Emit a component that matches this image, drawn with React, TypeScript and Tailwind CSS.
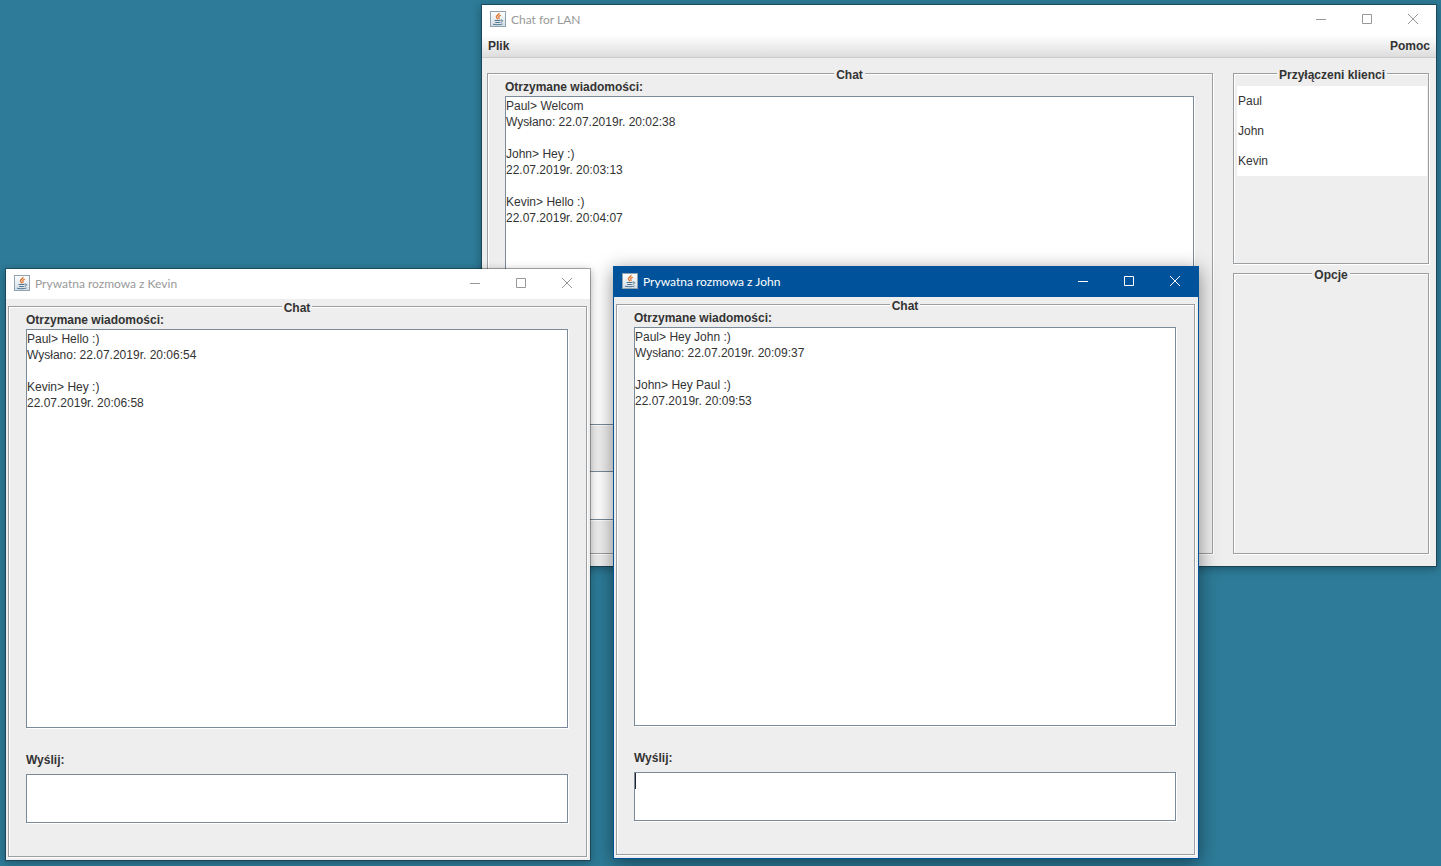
import React, { useId } from "react";

type Message = { author: string; text: string; stamp: string };

function JavaIcon() {
  return (
    <svg width="16" height="16" viewBox="0 0 16 16" fill="none" aria-hidden="true" className="shrink-0">
      <defs>
        <linearGradient id="java-tile" x1="0" y1="0" x2="0" y2="1">
          <stop offset="0" stopColor="#ffffff" />
          <stop offset="1" stopColor="#d3dde5" />
        </linearGradient>
      </defs>
      <rect x="0.5" y="0.5" width="15" height="15" fill="url(#java-tile)" stroke="#8fa3b1" />
      <path d="M9 2c.6 1.800-3.500 2.600-2.500 4.300.5.8 1.300 1.100.8 2" stroke="#e0752c" strokeWidth="1.400" />
      <path d="M10.900 4.300c-1.800.6-2.700 1.300-2 2.200.4.600.2 1.200-.3 1.700" stroke="#e0752c" strokeWidth="1.200" />
      <path d="M4.500 9.500h6M5.200 11.500h4.600M3 13.200c2.200.7 7.300.7 9.500-.2" stroke="#4f7690" />
      <path d="M10.800 9c2.500-.4 2.500 1.600-.2 2.300" stroke="#4f7690" />
    </svg>
  );
}

function WindowButton({ label, path }: { label: string; path: string }) {
  return (
    <button type="button" aria-label={label} className="flex h-full w-[46px] items-center justify-center">
      <svg width="10" height="10" viewBox="0 0 10 10" fill="none" stroke="currentColor" aria-hidden="true">
        <path d={path} />
      </svg>
    </button>
  );
}

function Window({
  title,
  active = false,
  place,
  children,
}: {
  title: string;
  active?: boolean;
  place: string;
  children: React.ReactNode;
}) {
  return (
    <section
      aria-label={title}
      className={`absolute flex flex-col border bg-[#eeeeee] bg-clip-padding ${place} ${
        active
          ? "border-[#00539a] shadow-[0_4px_18px_rgba(0,0,0,0.45)]"
          : "border-black/30 shadow-[0_2px_8px_rgba(0,0,0,0.3)]"
      }`}
    >
      <header
        className={`flex h-[30px] shrink-0 items-center pb-0.5 pl-2 font-[Lato,'Open_Sans',sans-serif] text-xs ${
          active ? "bg-[#00539a] text-white" : "bg-white text-[#999999]"
        }`}
      >
        <JavaIcon />
        <h1 className="min-w-0 flex-1 truncate pt-px pl-[5px]">{title}</h1>
        <WindowButton label="Minimalizuj" path="M0 5.5H10" />
        <WindowButton label="Maksymalizuj" path="M.5 .5H9.500V9.500H.5Z" />
        <WindowButton label="Zamknij" path="M0 0L10 10M10 0L0 10" />
      </header>
      {children}
    </section>
  );
}

function GroupBox({ title, className, children }: { title: string; className: string; children?: React.ReactNode }) {
  return (
    <fieldset
      className={`min-w-0 border border-[#9c9fa1] shadow-[inset_1px_1px_0_#fff,1px_1px_0_#fff] ${className}`}
    >
      <legend className="mx-auto bg-[#eeeeee] px-0.5 pt-[3px] leading-3 font-bold">{title}</legend>
      {children}
    </fieldset>
  );
}

function ChatPanel({ messages, focused = false }: { messages: Message[]; focused?: boolean }) {
  const id = useId();
  return (
    <GroupBox title="Chat" className="flex flex-1 flex-col pr-[18px] pb-[33px] pl-[17px]">
      <h2 className="-mt-0.5 shrink-0 pb-px font-bold">Otrzymane wiadomości:</h2>
      <div
        role="log"
        className="min-h-0 flex-1 overflow-hidden border border-[#7a8a99] bg-white pt-px shadow-[1px_1px_0_#fff]"
      >
        {messages.map((m) => (
          <p key={m.stamp} className="mb-4">
            {m.author}&gt; {m.text}
            <br />
            {m.stamp}
          </p>
        ))}
      </div>
      <label htmlFor={id} className="shrink-0 pt-6 pb-1.5 font-bold">
        Wyślij:
      </label>
      <div className="flex h-[49px] shrink-0 border border-[#7a8a99] bg-white shadow-[1px_1px_0_#fff]">
        {focused && <span className="h-4 w-px bg-[#222233]" />}
        <textarea id={id} className="min-w-0 flex-1 resize-none outline-none" />
      </div>
    </GroupBox>
  );
}

const clients = ["Paul", "John", "Kevin"];

const lanMessages: Message[] = [
  { author: "Paul", text: "Welcom", stamp: "Wysłano: 22.07.2019r. 20:02:38" },
  { author: "John", text: "Hey :)", stamp: "22.07.2019r. 20:03:13" },
  { author: "Kevin", text: "Hello :)", stamp: "22.07.2019r. 20:04:07" },
];

const kevinMessages: Message[] = [
  { author: "Paul", text: "Hello :)", stamp: "Wysłano: 22.07.2019r. 20:06:54" },
  { author: "Kevin", text: "Hey :)", stamp: "22.07.2019r. 20:06:58" },
];

const johnMessages: Message[] = [
  { author: "Paul", text: "Hey John :)", stamp: "Wysłano: 22.07.2019r. 20:09:37" },
  { author: "John", text: "Hey Paul :)", stamp: "22.07.2019r. 20:09:53" },
];

export default function App() {
  return (
    <main className="relative min-h-screen overflow-hidden bg-[#2d7b98] font-['Liberation_Sans',Arial,sans-serif] text-xs text-[#333333]">
      <Window title="Chat for LAN" place="left-[481px] top-1 h-[563px] w-[956px]">
        <nav className="flex h-[23px] shrink-0 items-center justify-between border-b border-[#cccccc] bg-linear-to-b from-white to-[#dddddd] px-1.5 font-bold">
          <button type="button">Plik</button>
          <button type="button">Pomoc</button>
        </nav>
        <div className="flex min-h-0 flex-1 gap-5 pt-2 pr-[7px] pb-3 pl-[5px]">
          <ChatPanel messages={lanMessages} />
          <div className="flex w-[196px] shrink-0 flex-col gap-0.5">
            <GroupBox title="Przyłączeni klienci" className="h-[198px] shrink-0 pr-px pl-[3px]">
              <ul className="mt-[5px] bg-white">
                {clients.map((name) => (
                  <li key={name} className="flex h-[30px] items-center pl-px">
                    {name}
                  </li>
                ))}
              </ul>
            </GroupBox>
            <GroupBox title="Opcje" className="flex-1" />
          </div>
        </div>
      </Window>

      <Window title="Prywatna rozmowa z Kevin" place="left-[5px] top-[268px] h-[593px] w-[586px]">
        <div className="flex min-h-0 flex-1 pr-[3px] pb-[3px] pl-0.5">
          <ChatPanel messages={kevinMessages} />
        </div>
      </Window>

      <Window title="Prywatna rozmowa z John" active place="left-[613px] top-[266px] h-[593px] w-[586px]">
        <div className="flex min-h-0 flex-1 pr-[3px] pb-[3px] pl-0.5">
          <ChatPanel messages={johnMessages} focused />
        </div>
      </Window>
    </main>
  );
}
